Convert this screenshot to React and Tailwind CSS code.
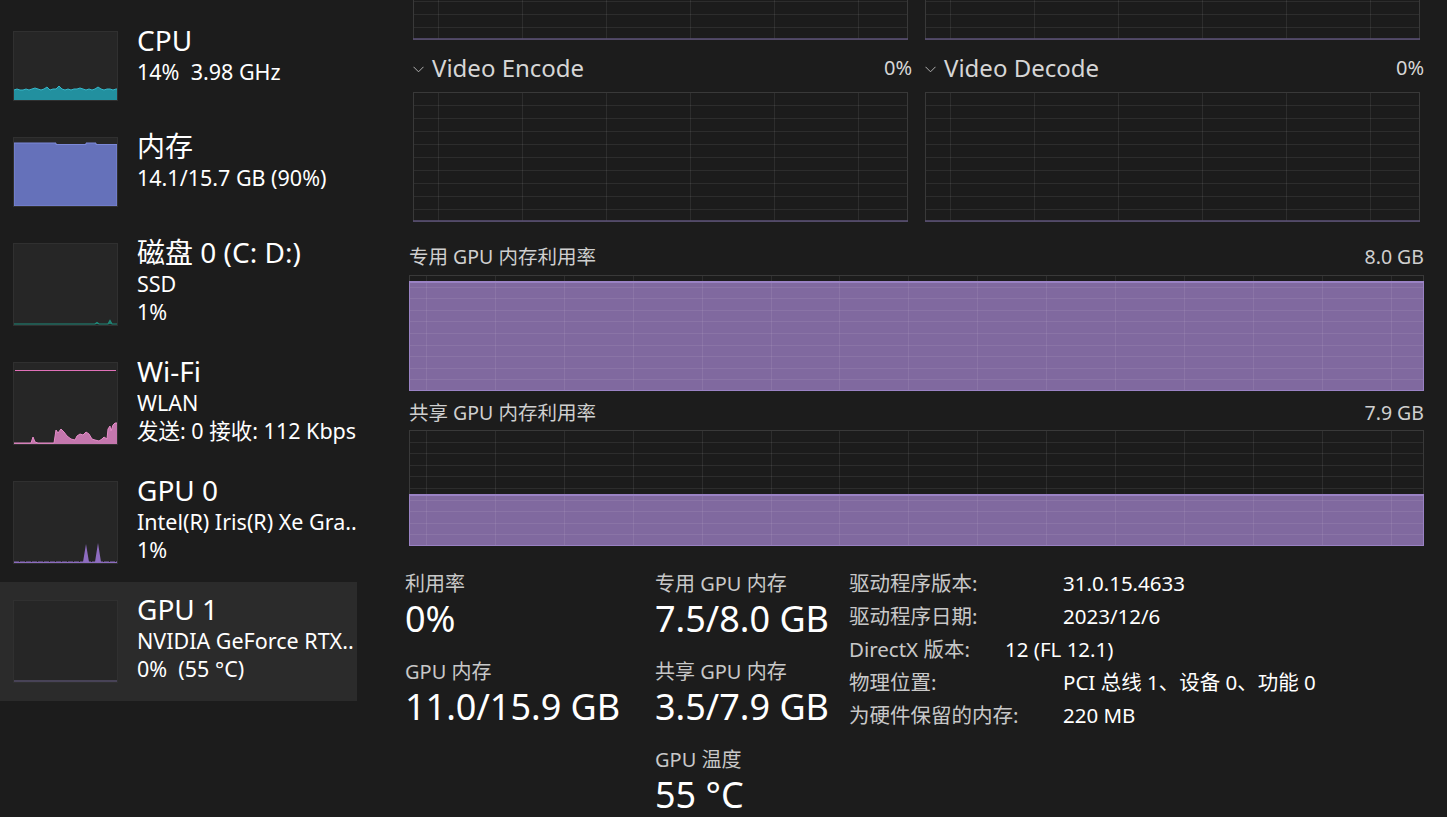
import React from 'react';

const cpuY = [58, 57, 58, 58, 57, 58, 57, 56, 57, 58, 57, 55, 58, 57, 57, 54, 57, 58, 57, 58, 57, 57, 56, 57, 58, 57, 58, 57, 55, 57, 58, 57, 57, 58, 57, 57];

const wifiPts = [
  [0, 80], [17, 80], [19, 74], [21, 79], [24, 80], [40, 80], [42, 67], [44, 70], [47, 66], [50, 69],
  [53, 73], [57, 76], [61, 77], [63, 73], [66, 71], [69, 72], [72, 69], [75, 71], [78, 76], [81, 77],
  [85, 78], [88, 76], [90, 74], [93, 76], [94, 66], [96, 63], [97, 68], [99, 62], [101, 60], [103, 60],
];

function areaPath(pts, bottom) {
  const top = pts.map(([x, y], i) => `${i ? 'L' : 'M'}${x} ${y}`).join(' ');
  return `${top} L${pts[pts.length - 1][0]} ${bottom} L${pts[0][0]} ${bottom} Z`;
}

function linePath(pts) {
  return pts.map(([x, y], i) => `${i ? 'L' : 'M'}${x} ${y}`).join(' ');
}

const cpuPts = cpuY.map((y, i) => [Math.min(i * 3, 103), y]);

function Thumb({ tall, children }) {
  return (
    <div className={`${tall ? 'h-[83px]' : 'h-[70px]'} w-[105px] shrink-0 border border-[#303030] bg-[#262626]`}>
      <svg className="block h-full w-full" viewBox={`0 0 103 ${tall ? 81 : 68}`} preserveAspectRatio="none">
        {children}
      </svg>
    </div>
  );
}

function NavRow({ title, lines, tall, selected, graph }) {
  return (
    <div className={`flex pl-[13px] ${tall ? 'h-[119px]' : 'h-[106px]'} ${selected ? 'bg-[#2b2b2b]' : ''}`}>
      <div className="mt-[18px]">
        <Thumb tall={tall}>{graph}</Thumb>
      </div>
      <div className="ml-[19px] min-w-0 flex-1 overflow-hidden pt-[9px] text-white">
        <div className="h-[36px] whitespace-nowrap text-[28px] leading-[36px]">{title}</div>
        {lines.map((l, i) => (
          <div key={i} className="h-[28px] whitespace-nowrap text-[21.5px] leading-[28px]">
            {l}
          </div>
        ))}
      </div>
    </div>
  );
}

function Graph({ w, h, step, offset, rows, fillTop, bottomLine }) {
  const vx = [];
  for (let x = offset; x < w - 1; x += step) vx.push(Math.round(x) + 0.5);
  const hy = [];
  for (let i = 1; i < rows; i++) hy.push(Math.round((i * h) / rows) + 0.5);
  return (
    <svg width={w} height={h} className="block shrink-0">
      {fillTop != null && <rect x="0" y={fillTop} width={w} height={h - fillTop} fill="#80699f" />}
      {vx.map((x) => (
        <line key={'v' + x} x1={x} x2={x} y1="0" y2={h} stroke="rgba(255,255,255,0.08)" />
      ))}
      {hy.map((y) => (
        <line key={'h' + y} x1="0" x2={w} y1={y} y2={y} stroke="rgba(255,255,255,0.08)" />
      ))}
      <rect x="0.5" y="0.5" width={w - 1} height={h - 1} fill="none" stroke="#393939" />
      {fillTop != null && (
        <>
          <rect x="0.5" y={fillTop + 0.5} width={w - 1} height={h - fillTop - 1} fill="none" stroke="#9a82c4" />
          <line x1="0" x2={w} y1={fillTop + 1} y2={fillTop + 1} stroke="#9a82c4" strokeWidth="2" />
        </>
      )}
      {bottomLine && <line x1="0" x2={w} y1={h - 1} y2={h - 1} stroke="#5d5279" strokeWidth="1.5" />}
    </svg>
  );
}

function Chevron() {
  return (
    <svg width="11" height="7" viewBox="0 0 11 7" className="mr-[8px] mt-[2px] shrink-0">
      <polyline points="0.5,0.8 5.5,5.8 10.5,0.8" fill="none" stroke="#b0b0b0" strokeWidth="1" />
    </svg>
  );
}

function EngineHeader({ name }) {
  return (
    <div className="flex h-[32px] w-[499px] items-center justify-between">
      <div className="flex items-center text-[24px] leading-[32px] text-[#d6d6d6]">
        <Chevron />
        {name}
      </div>
      <div className="text-[20px] leading-[32px] text-[#d6d6d6]">0%</div>
    </div>
  );
}

function Stat({ label, value, last }) {
  return (
    <div className={last ? '' : 'mb-[19px]'}>
      <div className="h-[26px] whitespace-nowrap text-[20px] leading-[26px] text-[#c8c8c8]">{label}</div>
      <div className="mt-[1px] h-[42px] whitespace-nowrap text-[36px] leading-[42px] text-white">{value}</div>
    </div>
  );
}

function Detail({ label, value, labelW }) {
  return (
    <div className="flex h-[33px] whitespace-nowrap text-[20.5px] leading-[33px]">
      <div className={`${labelW} shrink-0 text-[#c8c8c8]`}>{label}</div>
      <div className="text-white">{value}</div>
    </div>
  );
}

export default function App() {
  return (
    <div className="flex h-screen w-full overflow-hidden bg-[#1c1c1c] font-['Noto_Sans','Noto_Sans_CJK_SC',sans-serif]">
      {/* sidebar */}
      <div className="w-[357px] shrink-0 pt-[13px]">
        <NavRow
          title="CPU"
          lines={['14%\u00a0\u00a03.98 GHz']}
          graph={
            <>
              <path d={areaPath(cpuPts, 68)} fill="#22909f" />
              <path d={linePath(cpuPts)} fill="none" stroke="#35b7c9" strokeWidth="1" />
            </>
          }
        />
        <NavRow
          title="内存"
          lines={['14.1/15.7 GB (90%)']}
          graph={
            <path
              d="M0 5 L42 5 L42 6.5 L72 6.5 L72 5 L82 5 L82 6.5 L103 6.5 L103 68 L0 68 Z"
              fill="#6571ba"
              stroke="#7c89d8"
              strokeWidth="1"
            />
          }
        />
        <NavRow
          title="磁盘 0 (C: D:)"
          tall
          lines={['SSD', '1%']}
          graph={
            <path
              d="M0 80 L81 80 L83 78.5 L85 80 L94 80 L96 76.5 L98 80 L103 80"
              fill="#1c7a6c"
              stroke="#1f8a7a"
              strokeWidth="1.2"
            />
          }
        />
        <NavRow
          title="Wi-Fi"
          tall
          lines={['WLAN', '发送: 0 接收: 112 Kbps']}
          graph={
            <>
              <line x1="1" x2="102" y1="7.5" y2="7.5" stroke="#e070b8" strokeWidth="1.2" />
              <path d={areaPath(wifiPts, 81)} fill="#c477ad" />
              <path d={linePath(wifiPts)} fill="none" stroke="#e58bc8" strokeWidth="1" />
            </>
          }
        />
        <NavRow
          title="GPU 0"
          tall
          lines={['Intel(R) Iris(R) Xe Gra..', '1%']}
          graph={
            <>
              <path
                d="M0 80 L69 80 L72 62 L75 80 L81 80 L84 61 L87 80 L103 80 L103 81 L0 81 Z"
                fill="#8e6cc0"
              />
              <line x1="0" x2="103" y1="80" y2="80" stroke="#8a6cbb" strokeWidth="1.2" strokeDasharray="5 1" />
            </>
          }
        />
        <NavRow
          title="GPU 1"
          tall
          selected
          lines={['NVIDIA GeForce RTX..', '0%\u00a0\u00a0(55 °C)']}
          graph={<line x1="0" x2="103" y1="80" y2="80" stroke="#6b6088" strokeWidth="1.2" />}
        />
      </div>

      {/* main */}
      <div className="ml-[52px] flex w-[1015px] shrink-0 flex-col">
        <div className="flex gap-[17px] px-[4px]">
          <div className="flex h-[40px] flex-col justify-end overflow-hidden">
            <Graph w={495} h={130} step={84} offset={25} rows={10} bottomLine />
          </div>
          <div className="flex h-[40px] flex-col justify-end overflow-hidden">
            <Graph w={495} h={130} step={84} offset={25} rows={10} bottomLine />
          </div>
        </div>

        <div className="mt-[12px] flex gap-[13px] pl-[4px]">
          <EngineHeader name="Video Encode" />
          <EngineHeader name="Video Decode" />
        </div>

        <div className="mt-[8px] flex gap-[17px] px-[4px]">
          <Graph w={495} h={130} step={84} offset={25} rows={10} bottomLine />
          <Graph w={495} h={130} step={84} offset={25} rows={10} bottomLine />
        </div>

        <div className="mt-[23px] flex h-[24px] justify-between text-[19.5px] leading-[24px] text-[#cfcfcf]">
          <span>专用 GPU 内存利用率</span>
          <span>8.0 GB</span>
        </div>
        <div className="mt-[6px]">
          <Graph w={1015} h={116} step={68.9} offset={17} rows={10} fillTop={6} />
        </div>

        <div className="mt-[10px] flex h-[24px] justify-between text-[19.5px] leading-[24px] text-[#cfcfcf]">
          <span>共享 GPU 内存利用率</span>
          <span>7.9 GB</span>
        </div>
        <div className="mt-[5px]">
          <Graph w={1015} h={116} step={68.9} offset={17} rows={10} fillTop={64} />
        </div>

        <div className="-ml-[4px] mt-[20px] flex">
          <div className="w-[250px] shrink-0 pt-[5px]">
            <Stat label="利用率" value="0%" />
            <Stat label="GPU 内存" value="11.0/15.9 GB" />
          </div>
          <div className="w-[194px] shrink-0 pt-[5px]">
            <Stat label="专用 GPU 内存" value="7.5/8.0 GB" />
            <Stat label="共享 GPU 内存" value="3.5/7.9 GB" />
            <Stat label="GPU 温度" value="55 °C" last />
          </div>
          <div className="pt-[1px]">
            <Detail label="驱动程序版本:" value="31.0.15.4633" labelW="w-[214px]" />
            <Detail label="驱动程序日期:" value="2023/12/6" labelW="w-[214px]" />
            <Detail label="DirectX 版本:" value="12 (FL 12.1)" labelW="w-[156px]" />
            <Detail label="物理位置:" value="PCI 总线 1、设备 0、功能 0" labelW="w-[214px]" />
            <Detail label="为硬件保留的内存:" value="220 MB" labelW="w-[214px]" />
          </div>
        </div>
      </div>
    </div>
  );
}
